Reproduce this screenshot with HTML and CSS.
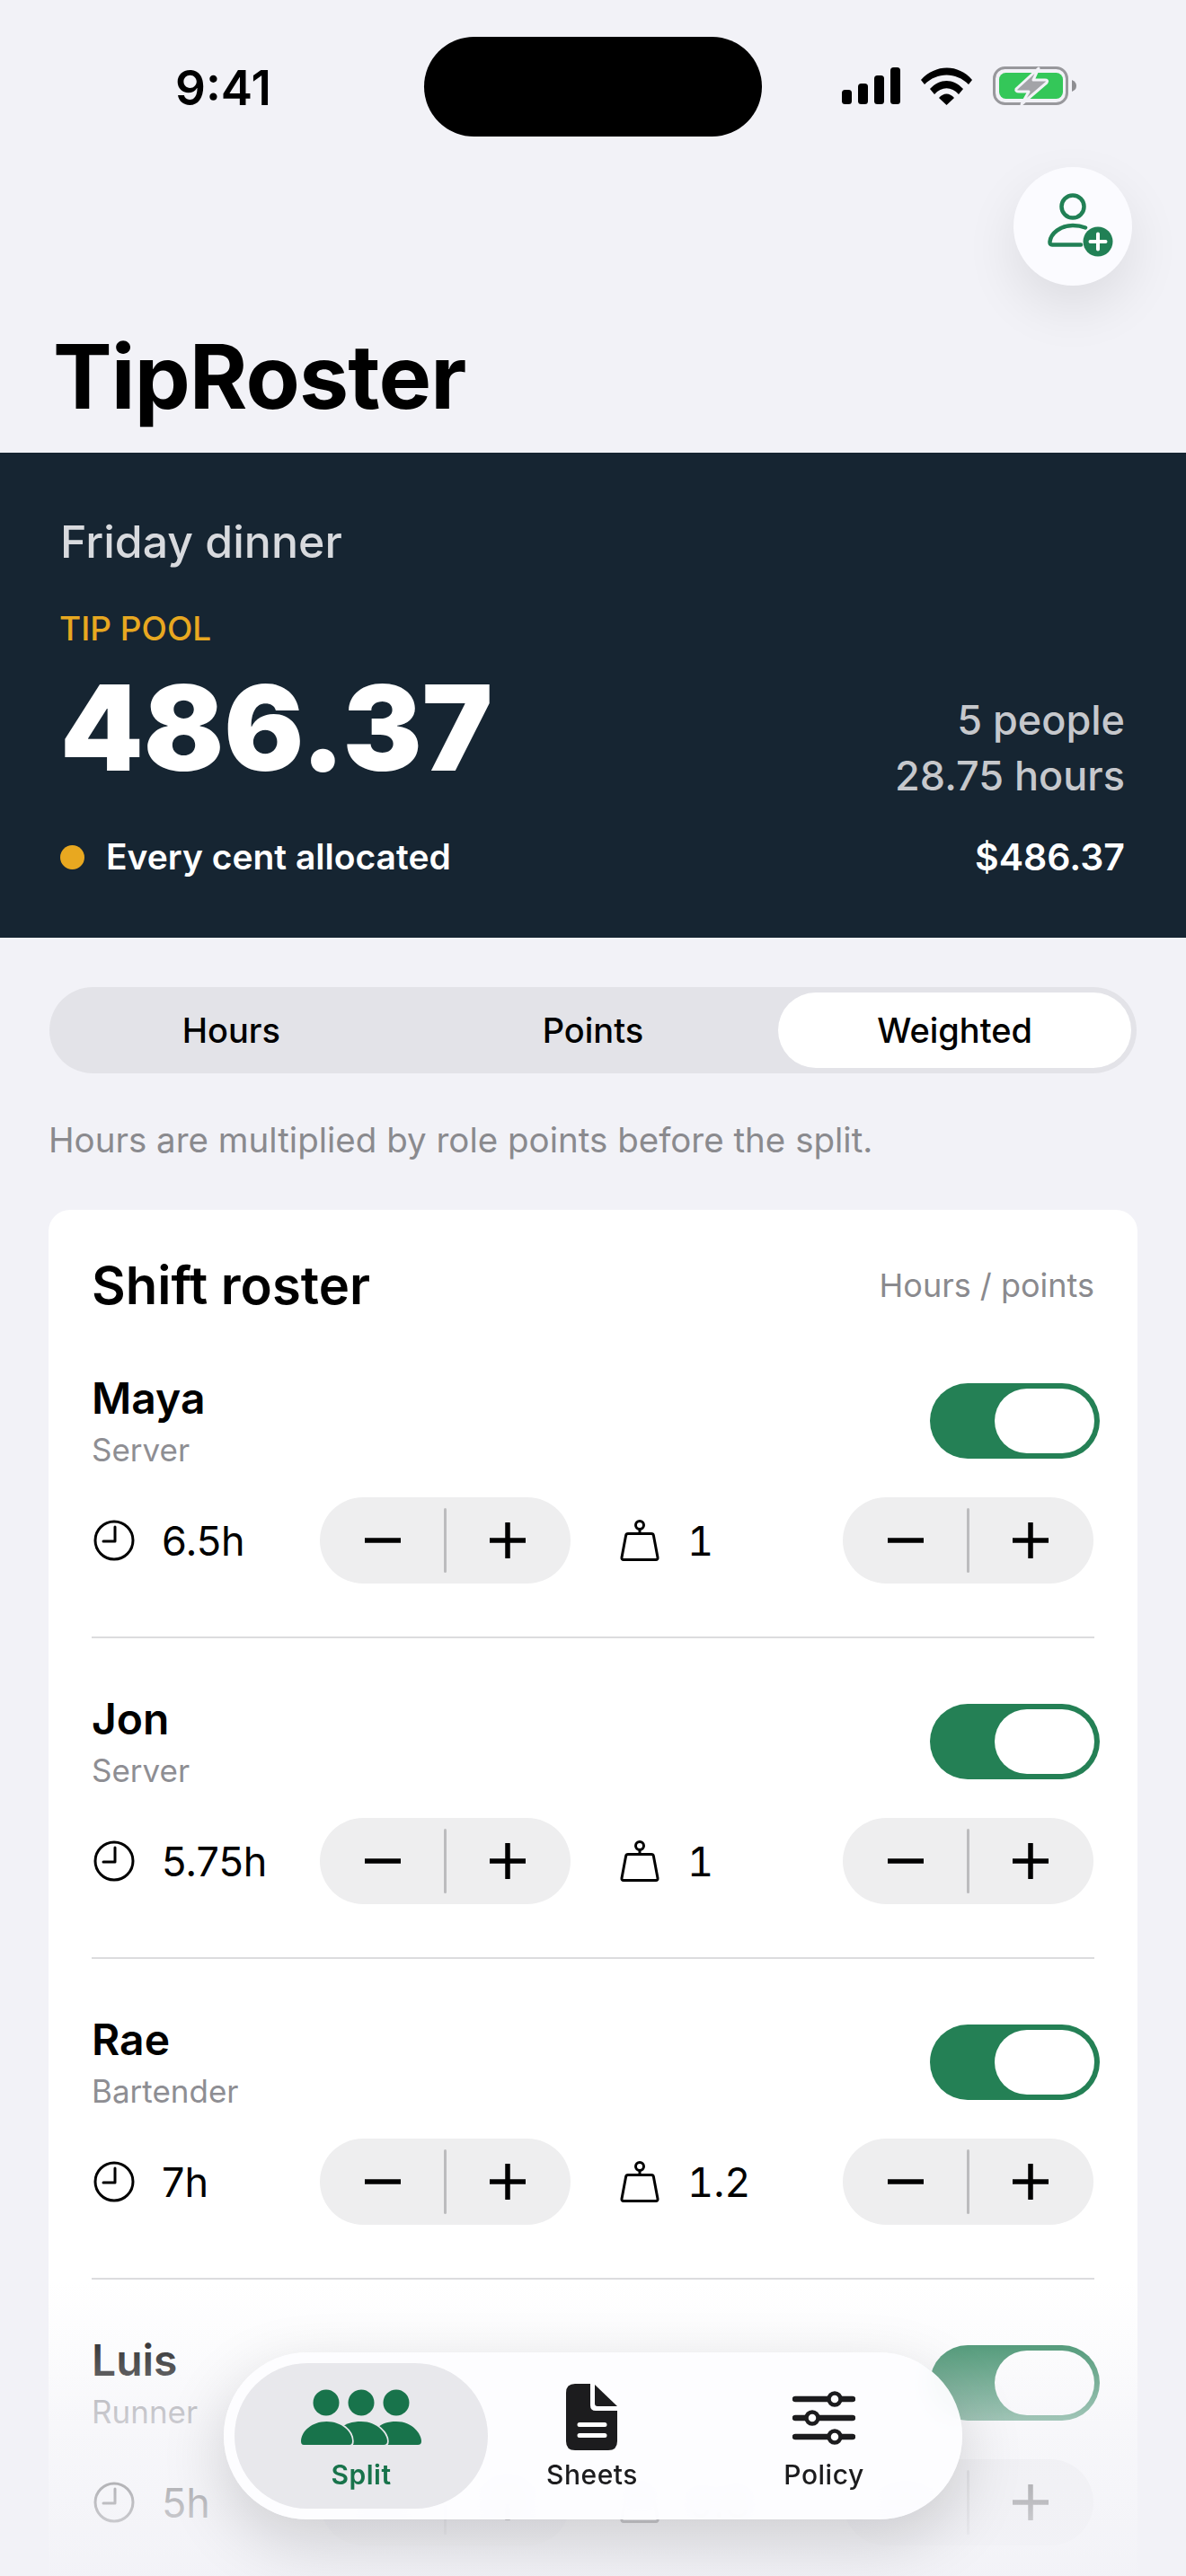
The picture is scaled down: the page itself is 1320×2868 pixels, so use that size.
FILE: index.html
```html
<!DOCTYPE html>
<html lang="en">
<head>
<meta charset="utf-8">
<title>TipRoster</title>
<link rel="stylesheet" href="styles.css">
</head>
<body>
<div class="screen">
  <div class="island"></div>
  <header class="status">
    <span class="clock-time">9:41</span>
    <svg class="status-icons" width="262" height="44" viewBox="0 0 262 44">
      <rect x="0" y="26" width="11" height="16" rx="3.5"/>
      <rect x="18" y="19" width="11" height="23" rx="3.5"/>
      <rect x="36" y="10" width="11" height="32" rx="3.5"/>
      <rect x="54" y="1" width="11" height="41" rx="3.5"/>
      <path d="M88 15 C104 -3 130 -3 145 15 L141 20 C127 6 106 6 92 20Z"/>
      <path d="M98 25 C109 13 124 13 135 25 L130 31 C122 22 111 22 103 31Z"/>
      <path d="M108 35 C113 29 120 29 125 35 L116.5 43Z"/>
      <rect x="169.5" y="1.5" width="81" height="40" rx="12" fill="none" stroke="#98989c" stroke-width="3"/>
      <rect x="175" y="7" width="71" height="29" rx="7.5" fill="#34c759"/>
      <path d="M256 15 Q261 17 261 21.500 Q261 26 256 28Z" fill="#8e8e92"/>
      <path d="M219 2 L194 25 Q193 28 197 28 H208 L200 42 L228 18 Q230 15 226 15 H213Z" fill="#a3a3a8" stroke="#f2f2f7" stroke-width="3" stroke-linejoin="round"/>
    </svg>
  </header>

  <div class="top-actions">
    <button class="add-btn" aria-label="Add person">
      <svg class="add-ico" width="80" height="80" viewBox="-6 2 80 80">
        <circle cx="34" cy="20" r="12.500" fill="none" stroke="#218055" stroke-width="4.500"/>
        <path d="M48 43.500 C43 41.500 39 41 34 41 C20 41 9.500 50 8.500 59 Q8.300 62.500 11 62.500 H43" fill="none" stroke="#218055" stroke-width="4.500" stroke-linecap="round"/>
        <circle cx="62" cy="59" r="16.500" fill="#218055"/>
        <path d="M62 50.500 V67.500 M53.500 59 H70.500" stroke="#fff" stroke-width="4" stroke-linecap="round"/>
      </svg>
    </button>
  </div>

  <h1 class="title">TipRoster</h1>

  <section class="hero">
    <div class="hero-name">Friday dinner</div>
    <div class="hero-label">TIP POOL</div>
    <div class="hero-main">
      <div class="hero-amount">486.37</div>
      <div class="hero-meta"><div>5 people</div><div>28.75 hours</div></div>
    </div>
    <div class="hero-foot">
      <div class="alloc"><span class="dot"></span>Every cent allocated</div>
      <div class="alloc-total">$486.37</div>
    </div>
  </section>

  <div class="segment">
    <div class="seg">Hours</div>
    <div class="seg">Points</div>
    <div class="seg seg-on">Weighted</div>
  </div>
  <p class="hint">Hours are multiplied by role points before the split.</p>

  <section class="card">
    <div class="card-head"><h2>Shift roster</h2><span>Hours / points</span></div>

    <article class="row">
      <div class="row-head">
        <div><div class="name">Maya</div><div class="role">Server</div></div>
        <div class="toggle"><span class="thumb"></span></div>
      </div>
      <div class="controls">
        <div class="metric">
          <svg class="ico" width="46" height="46" viewBox="0 0 46 46"><circle cx="23" cy="23" r="21"/><path d="M24 8 V24 H11"/></svg>
          <span>6.5h</span>
        </div>
        <div class="stepper"><div class="half"><svg width="40" height="40" viewBox="0 0 40 40"><path d="M1 20 H39"/></svg></div><div class="half"><svg width="40" height="40" viewBox="0 0 40 40"><path d="M1 20 H39 M20 1 V39"/></svg></div></div>
        <div class="metric points">
          <svg class="ico" width="46" height="48" viewBox="0 0 46 48"><circle cx="23" cy="7" r="4.500"/><path d="M23 11.500 V16.500"/><path d="M10 16.500 H36 Q38 16.500 38.400 18.500 L43 43 Q43.300 45.500 41 45.500 H5 Q2.700 45.500 3 43 L7.600 18.500 Q8 16.500 10 16.500Z"/></svg>
          <span>1</span>
        </div>
        <div class="stepper"><div class="half"><svg width="40" height="40" viewBox="0 0 40 40"><path d="M1 20 H39"/></svg></div><div class="half"><svg width="40" height="40" viewBox="0 0 40 40"><path d="M1 20 H39 M20 1 V39"/></svg></div></div>
      </div>
    </article>

    <article class="row">
      <div class="row-head">
        <div><div class="name">Jon</div><div class="role">Server</div></div>
        <div class="toggle"><span class="thumb"></span></div>
      </div>
      <div class="controls">
        <div class="metric">
          <svg class="ico" width="46" height="46" viewBox="0 0 46 46"><circle cx="23" cy="23" r="21"/><path d="M24 8 V24 H11"/></svg>
          <span>5.75h</span>
        </div>
        <div class="stepper"><div class="half"><svg width="40" height="40" viewBox="0 0 40 40"><path d="M1 20 H39"/></svg></div><div class="half"><svg width="40" height="40" viewBox="0 0 40 40"><path d="M1 20 H39 M20 1 V39"/></svg></div></div>
        <div class="metric points">
          <svg class="ico" width="46" height="48" viewBox="0 0 46 48"><circle cx="23" cy="7" r="4.500"/><path d="M23 11.500 V16.500"/><path d="M10 16.500 H36 Q38 16.500 38.400 18.500 L43 43 Q43.300 45.500 41 45.500 H5 Q2.700 45.500 3 43 L7.600 18.500 Q8 16.500 10 16.500Z"/></svg>
          <span>1</span>
        </div>
        <div class="stepper"><div class="half"><svg width="40" height="40" viewBox="0 0 40 40"><path d="M1 20 H39"/></svg></div><div class="half"><svg width="40" height="40" viewBox="0 0 40 40"><path d="M1 20 H39 M20 1 V39"/></svg></div></div>
      </div>
    </article>

    <article class="row">
      <div class="row-head">
        <div><div class="name">Rae</div><div class="role">Bartender</div></div>
        <div class="toggle"><span class="thumb"></span></div>
      </div>
      <div class="controls">
        <div class="metric">
          <svg class="ico" width="46" height="46" viewBox="0 0 46 46"><circle cx="23" cy="23" r="21"/><path d="M24 8 V24 H11"/></svg>
          <span>7h</span>
        </div>
        <div class="stepper"><div class="half"><svg width="40" height="40" viewBox="0 0 40 40"><path d="M1 20 H39"/></svg></div><div class="half"><svg width="40" height="40" viewBox="0 0 40 40"><path d="M1 20 H39 M20 1 V39"/></svg></div></div>
        <div class="metric points">
          <svg class="ico" width="46" height="48" viewBox="0 0 46 48"><circle cx="23" cy="7" r="4.500"/><path d="M23 11.500 V16.500"/><path d="M10 16.500 H36 Q38 16.500 38.400 18.500 L43 43 Q43.300 45.500 41 45.500 H5 Q2.700 45.500 3 43 L7.600 18.500 Q8 16.500 10 16.500Z"/></svg>
          <span>1.2</span>
        </div>
        <div class="stepper"><div class="half"><svg width="40" height="40" viewBox="0 0 40 40"><path d="M1 20 H39"/></svg></div><div class="half"><svg width="40" height="40" viewBox="0 0 40 40"><path d="M1 20 H39 M20 1 V39"/></svg></div></div>
      </div>
    </article>

    <article class="row">
      <div class="row-head">
        <div><div class="name">Luis</div><div class="role">Runner</div></div>
        <div class="toggle"><span class="thumb"></span></div>
      </div>
      <div class="controls">
        <div class="metric">
          <svg class="ico" width="46" height="46" viewBox="0 0 46 46"><circle cx="23" cy="23" r="21"/><path d="M24 8 V24 H11"/></svg>
          <span>5h</span>
        </div>
        <div class="stepper"><div class="half"><svg width="40" height="40" viewBox="0 0 40 40"><path d="M1 20 H39"/></svg></div><div class="half"><svg width="40" height="40" viewBox="0 0 40 40"><path d="M1 20 H39 M20 1 V39"/></svg></div></div>
        <div class="metric points">
          <svg class="ico" width="46" height="48" viewBox="0 0 46 48"><circle cx="23" cy="7" r="4.500"/><path d="M23 11.500 V16.500"/><path d="M10 16.500 H36 Q38 16.500 38.400 18.500 L43 43 Q43.300 45.500 41 45.500 H5 Q2.700 45.500 3 43 L7.600 18.500 Q8 16.500 10 16.500Z"/></svg>
          <span>0.8</span>
        </div>
        <div class="stepper"><div class="half"><svg width="40" height="40" viewBox="0 0 40 40"><path d="M1 20 H39"/></svg></div><div class="half"><svg width="40" height="40" viewBox="0 0 40 40"><path d="M1 20 H39 M20 1 V39"/></svg></div></div>
      </div>
    </article>
  </section>

  <div class="fade"></div>

  <nav class="tabbar">
    <div class="tab tab-on">
      <svg width="134" height="74" viewBox="0 0 134 74">
        <circle cx="28" cy="21" r="14.500" fill="#18734b"/>
        <circle cx="67" cy="21" r="14.500" fill="#18734b"/>
        <circle cx="106" cy="21" r="14.500" fill="#18734b"/>
        <path d="M80 68 C78 52 87 42 106 42 C124 42 134 56 134 64 Q134 68 130 68Z" fill="#18734b"/>
        <path d="M39 68 C37 52 46 42 67 42 C85 42 96 56 96 64 Q96 68 92 68Z" fill="#18734b" stroke="#e8e8ec" stroke-width="3.500" paint-order="stroke"/>
        <path d="M3 68 Q0 68 0 64 C0 53 12 42 28.500 42 C45 42 57 53 57 64 Q57 68 54 68Z" fill="#18734b" stroke="#e8e8ec" stroke-width="3.500" paint-order="stroke"/>
      </svg>
      <span>Split</span>
    </div>
    <div class="tab">
      <svg width="58" height="74" viewBox="0 0 58 74">
        <path d="M10 0 H27 V24 Q27 30 33 30 H57 V64 Q57 74 47 74 H10 Q0 74 0 64 V10 Q0 0 10 0Z" fill="#1c1c1e"/>
        <path d="M32 1 L57 25 H35 Q32 25 32 22Z" fill="#1c1c1e"/>
        <path d="M15 45.500 H43 M15 57.500 H43" stroke="#fff" stroke-width="5" stroke-linecap="round"/>
      </svg>
      <span>Sheets</span>
    </div>
    <div class="tab">
      <svg width="70" height="74" viewBox="0 0 70 74">
        <path d="M3 17 H67 M3 38 H67 M3 59 H67" stroke="#1c1c1e" stroke-width="6.500" stroke-linecap="round"/>
        <circle cx="47" cy="17" r="6.500" fill="#fff" stroke="#1c1c1e" stroke-width="4.500"/>
        <circle cx="22" cy="38" r="6.500" fill="#fff" stroke="#1c1c1e" stroke-width="4.500"/>
        <circle cx="47" cy="59" r="6.500" fill="#fff" stroke="#1c1c1e" stroke-width="4.500"/>
      </svg>
      <span>Policy</span>
    </div>
  </nav>
</div>
</body>
</html>
```

FILE: styles.css
```css
* { box-sizing: border-box; }
html, body { margin: 0; padding: 0; }
body { background: #f2f2f7; font-family: Inter, "Liberation Sans", sans-serif; color: #000; }
.screen { position: relative; width: 1320px; height: 2868px; overflow: hidden; background: #f2f2f7; }

.island { position: absolute; left: 472px; top: 41px; width: 376px; height: 111px; border-radius: 56px; background: #000; }

.status { height: 186px; padding: 74px 121px 0 195px; display: flex; justify-content: space-between; align-items: flex-start; }
.clock-time { font-size: 53px; font-weight: 600; line-height: 48px; }

.top-actions { display: flex; justify-content: flex-end; padding-right: 60px; height: 132px; }
.add-btn { width: 132px; height: 132px; border-radius: 50%; border: 0; padding: 0; background: #fbfbff; box-shadow: 0 24px 60px rgba(0,0,0,.09); display: flex; align-items: center; justify-content: center; }
.add-ico { overflow: visible; }

.title { margin: 36px 0 0 59px; height: 150px; font-size: 98.500px; line-height: 132px; font-weight: 700; letter-spacing: -.9px; }

.hero { height: 540px; padding: 69px 68px 0 67px; background: #162532; color: #fff; }
.hero-name { font-size: 50px; line-height: 60px; font-weight: 500; color: #d8dade; }
.hero-label { margin: 45px 0 0 -1px; font-size: 37px; line-height: 44px; font-weight: 500; color: #e8a820; }
.hero-main { display: flex; justify-content: space-between; align-items: flex-start; margin-top: 13px; }
.hero-amount { font-size: 132px; line-height: 150px; font-weight: 900; }
.hero-meta { margin-top: 36px; text-align: right; font-size: 45px; line-height: 62px; font-weight: 500; color: #c6c8cc; }
.hero-foot { display: flex; justify-content: space-between; align-items: center; margin-top: 34px; font-size: 39px; line-height: 50px; font-weight: 600; }
.alloc { display: flex; align-items: center; gap: 24px; }
.alloc-total { font-size: 41px; }
.dot { width: 27px; height: 27px; border-radius: 50%; background: #e8a820; }

.segment { display: grid; grid-template-columns: repeat(3, 1fr); gap: 10px; margin: 55px 55px 0; height: 96px; padding: 6px; border-radius: 48px; background: #e3e3e8; font-size: 38px; font-weight: 500; }
.seg { display: flex; align-items: center; justify-content: center; border-radius: 42px; }
.seg-on { background: #fff; }

.hint { margin: 49px 54px 0; font-size: 38.500px; line-height: 50px; color: #8a8a8e; }

.card { margin: 53px 54px 0; padding: 47px 48px 0; background: #fff; border-radius: 24px; }
.card-head { display: flex; justify-content: space-between; align-items: center; height: 73px; }
.card-head h2 { margin: 0; font-size: 58px; font-weight: 600; line-height: 72px; }
.card-head span { font-size: 36px; color: #8a8a8e; }

.row { height: 357px; padding-top: 60px; border-bottom: 2px solid #dcdcde; }
.row-head { display: flex; justify-content: space-between; align-items: flex-start; height: 114px; }
.name { font-size: 48px; line-height: 60px; font-weight: 600; }
.role { font-size: 35px; line-height: 54px; color: #8e8e93; }
.toggle { width: 189px; height: 84px; margin: 13px -6px 0 0; padding: 6px; border-radius: 42px; background: #248055; display: flex; justify-content: flex-end; }
.thumb { width: 111px; height: 72px; border-radius: 36px; background: #fff; }

.controls { display: flex; align-items: center; margin-top: 26px; }
.metric { width: 254px; display: flex; align-items: center; gap: 30px; padding-left: 2px; font-size: 45px; }
.metric.points { width: 249px; margin-left: 54px; padding-left: 0; font-variant-numeric: tabular-nums; }
.ico { fill: none; stroke: #000; stroke-width: 3; stroke-linecap: round; stroke-linejoin: round; flex: none; }
.stepper { position: relative; width: 279px; height: 96px; border-radius: 48px; background: #eeeeef; display: flex; }
.stepper::after { content: ""; position: absolute; left: 138px; top: 12px; width: 3px; height: 72px; border-radius: 2px; background: #bcbcbe; }
.half { flex: 1; display: flex; align-items: center; justify-content: center; }
.half svg { stroke: #000; stroke-width: 5.500; stroke-linecap: round; fill: none; }

.fade { position: absolute; left: 0; right: 0; bottom: 0; height: 328px; pointer-events: none;
  background: linear-gradient(to bottom, rgba(242,242,247,0) 0, rgba(242,242,247,.26) 75px, rgba(242,242,247,.6) 154px, rgba(242,242,247,.78) 245px, rgba(242,242,247,.96) 328px); }

.tabbar { position: absolute; left: 249px; top: 2619px; width: 822px; height: 186px; padding: 12px; border-radius: 93px; background: rgba(253,253,255,.94); backdrop-filter: blur(14px); box-shadow: 0 24px 72px rgba(0,0,0,.16); display: flex; }
.tab { flex: none; width: 258px; display: flex; flex-direction: column; align-items: center; font-size: 30px; font-weight: 500; color: #1c1c1e; padding-top: 23px; }
.tab svg { height: 74px; }
.tab span { margin-top: 8px; line-height: 38px; letter-spacing: .5px; }
.tab-on { width: 282px; margin-right: -13px; border-radius: 81px; background: #e8e8ec; color: #18734b; font-weight: 600; }
```
